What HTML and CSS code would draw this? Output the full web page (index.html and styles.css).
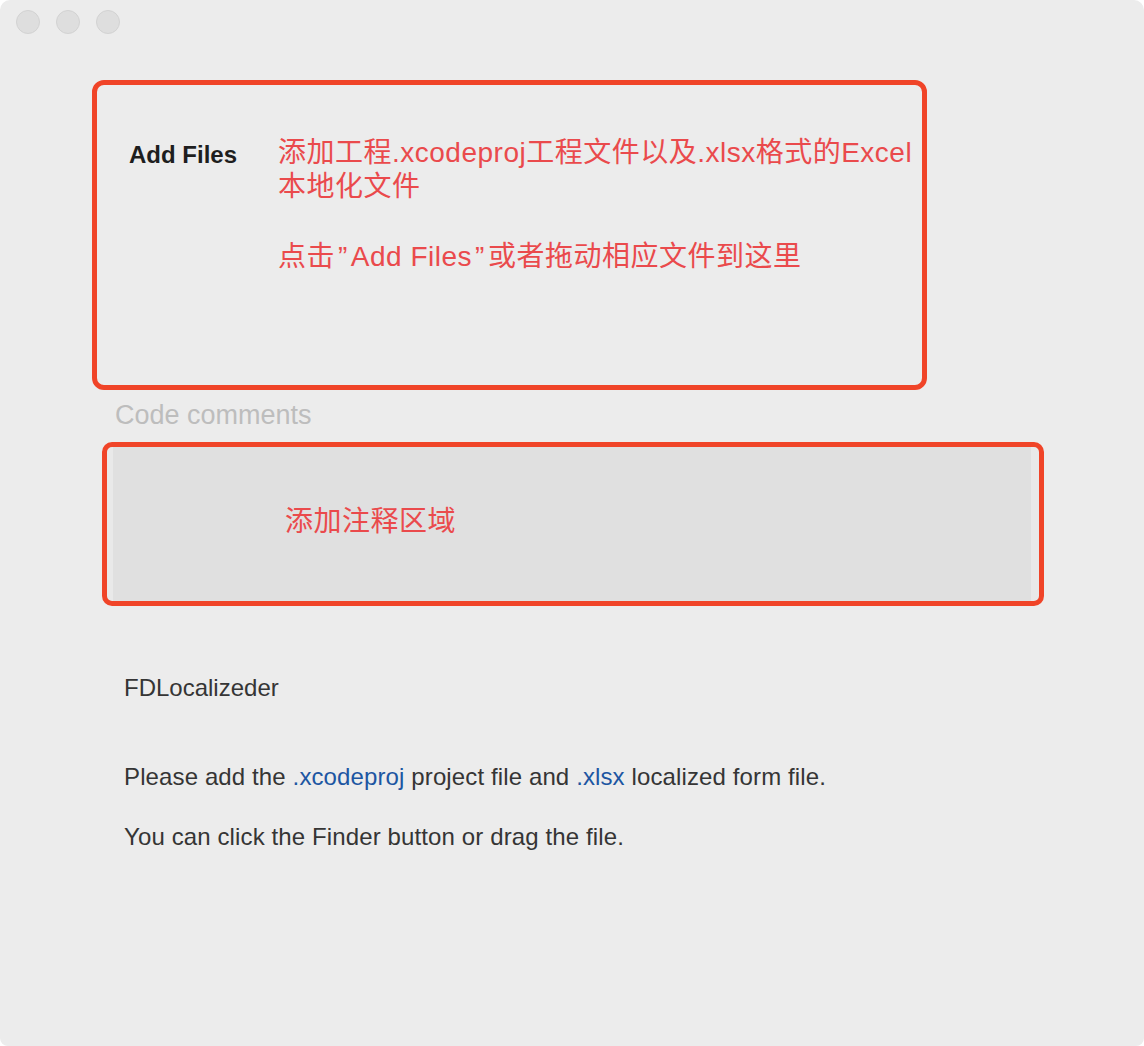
FILE: index.html
```html
<!DOCTYPE html>
<html lang="zh">
<head>
<meta charset="utf-8">
<title>FDLocalizeder</title>
<link rel="stylesheet" href="styles.css">
</head>
<body>
<div class="window">
  <div class="titlebar">
    <span class="light"></span>
    <span class="light"></span>
    <span class="light"></span>
  </div>

  <div class="drop-box">
    <div class="add-files">Add Files</div>
    <div class="note">
      <p class="note-line">添加工程.xcodeproj工程文件以及.xlsx格式的Excel<br>本地化文件</p>
      <p class="note-line second">点击<span class="quote">”</span>Add Files<span class="quote">”</span>或者拖动相应文件到这里</p>
    </div>
  </div>

  <div class="comments-label">Code comments</div>

  <div class="comments-box">
    <div class="comments-area">
      <span class="note-line">添加注释区域</span>
    </div>
  </div>

  <div class="app-name">FDLocalizeder</div>
  <p class="info first">Please add the <span class="ext">.xcodeproj</span> project file and <span class="ext">.xlsx</span> localized form file.</p>
  <p class="info">You can click the Finder button or drag the file.</p>
</div>
</body>
</html>
```

FILE: styles.css
```css
html, body {
  margin: 0;
  padding: 0;
  background: #ffffff;
}

.window {
  width: 1144px;
  height: 1046px;
  background: #ececec;
  border-radius: 10px 10px 8px 8px;
  overflow: hidden;
  font-family: "Liberation Sans", "Noto Sans CJK SC", sans-serif;
  display: flex;
  flex-direction: column;
  align-items: flex-start;
}

.titlebar {
  height: 44px;
  padding-left: 16px;
  display: flex;
  align-items: center;
  gap: 16px;
  box-sizing: border-box;
}

.light {
  width: 24px;
  height: 24px;
  border-radius: 50%;
  background: #dedede;
  border: 1px solid #d2d2d2;
  box-sizing: border-box;
}

.drop-box {
  margin-top: 36px;
  margin-left: 92px;
  width: 835px;
  height: 310px;
  box-sizing: border-box;
  border: 5px solid #f04428;
  border-radius: 12px;
  display: flex;
  padding: 51px 0 0 32px;
}

.add-files {
  width: 149px;
  flex: none;
  font-weight: bold;
  font-size: 24px;
  line-height: 34px;
  margin-top: 2px;
  color: #1e1e1e;
}

.note-line {
  margin: 0;
  font-family: "Liberation Sans", "Noto Sans CJK SC", sans-serif;
  font-size: 28px;
  line-height: 34px;
  letter-spacing: 0.5px;
  color: #ea4a4c;
  white-space: nowrap;
}

.note-line.second {
  margin-top: 36px;
}

.quote {
  display: inline-block;
  padding: 0 3px;
}

.comments-label {
  margin-top: 10px;
  margin-left: 115px;
  font-size: 27px;
  line-height: 30px;
  color: #bdbdbd;
}

.comments-box {
  margin-top: 12px;
  margin-left: 102px;
  width: 942px;
  height: 164px;
  box-sizing: border-box;
  border: 5px solid #f04428;
  border-radius: 10px;
  padding: 0 8px 0 6px;
  background: #e9e9e9;
  display: flex;
}

.comments-area {
  flex: 1;
  background: #e0e0e0;
  padding: 58px 0 0 172px;
}

.app-name {
  margin-top: 67px;
  margin-left: 124px;
  font-size: 24px;
  line-height: 30px;
  color: #353535;
}

.info {
  margin: 30px 0 0 124px;
  font-size: 24px;
  line-height: 30px;
  color: #353535;
  letter-spacing: 0.12px;
}

.info.first {
  margin-top: 59px;
}

.ext {
  color: #1d56a2;
}
```
